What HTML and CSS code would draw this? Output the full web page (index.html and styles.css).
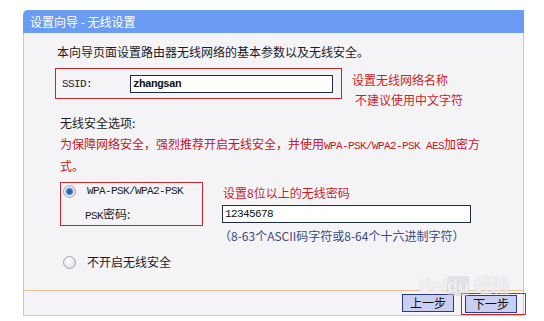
FILE: index.html
```html
<!DOCTYPE html>
<html lang="zh-CN">
<head>
  <meta charset="UTF-8" />
  <title>设置向导 - 无线设置</title>
  <link rel="stylesheet" href="styles.css">
</head>
<body>
  <div class="panel">
    <div class="panel-head">设置向导 - 无线设置</div>
    <div class="panel-body">
      <p class="intro">本向导页面设置路由器无线网络的基本参数以及无线安全。</p>

      <div class="ssid-row">
        <div class="mark-box ssid-box">
          <span class="label en">SSID:</span>
          <input class="field ssid-input" type="text" value="zhangsan" />
        </div>
        <div class="notes">
          <div>设置无线网络名称</div>
          <div class="note-2">不建议使用中文字符</div>
        </div>
      </div>

      <div class="sec-title">无线安全选项:</div>
      <p class="warn">为保障网络安全，强烈推荐开启无线安全，并使用<span class="en">WPA-PSK/WPA2-PSK AES</span>加密方<br>式。</p>

      <div class="sec-row">
        <div class="mark-box wpa-box">
          <div class="opt"><span class="radio on"></span><span class="en">WPA-PSK/WPA2-PSK</span></div>
          <div class="psk-label"><span class="en">PSK</span>密码:</div>
        </div>
        <div class="psk-col">
          <div class="note">设置8位以上的无线密码</div>
          <input class="field psk-input" type="text" value="12345678" />
          <div class="hint">（8-63个ASCII码字符或8-64个十六进制字符）</div>
        </div>
      </div>

      <div class="opt off-row"><span class="radio"></span>不开启无线安全</div>
    </div>
    <div class="panel-foot">
      <button class="btn prev">上一步</button>
      <span class="next-mark"><button class="btn">下一步</button></span>
    </div>
    <div class="watermark">Bai<span>du</span> 经验</div>
  </div>
</body>
</html>
```

FILE: styles.css
```css
body {
  margin: 0;
  background: #fff;
  font-family: "Noto Sans CJK SC", sans-serif;
  font-size: 12px;
  color: #1c1c28;
}

p {
  margin: 0;
}

.en {
  font-family: "Liberation Mono", monospace;
  font-size: 11px;
  letter-spacing: -0.6px;
}

.panel {
  position: relative;
  width: 501px;
  margin: 10px 0 0 23px;
}

.panel-head {
  height: 23px;
  line-height: 23px;
  padding-left: 7px;
  background: #6a9cf3;
  color: #fff;
  border-top-left-radius: 5px;
}

.panel-body {
  height: 257px;
  box-sizing: border-box;
  padding: 11px 0 0 33px;
  background: #f4f4f7;
  border-left: 1px solid #ebbe93;
  border-right: 1px solid #ebbe93;
}

.intro {
  line-height: 16px;
}

.mark-box {
  box-sizing: border-box;
  border: 1px solid #c4262e;
}

.ssid-row {
  display: flex;
  margin: 8px 0 0 -2px;
}

.ssid-box {
  width: 287px;
  height: 31px;
  display: flex;
  align-items: center;
  padding-left: 6px;
}

.ssid-box .label {
  width: 68px;
}

.field {
  height: 18px;
  box-sizing: border-box;
  margin: 0;
  padding: 0 2px;
  border: 1px solid #1e2a48;
  background: #fff;
  font-family: "Liberation Mono", monospace;
  font-size: 11px;
  letter-spacing: -0.6px;
  color: #111;
  outline: none;
}

.ssid-input {
  width: 203px;
  font-weight: bold;
}

.notes {
  color: #cc1f1f;
  line-height: 16px;
  padding: 4px 0 0 10px;
}

.note-2 {
  margin: 4px 0 0 3px;
}

.sec-title {
  margin: 7px 0 0 3px;
  line-height: 16px;
}

.warn {
  margin: 3px 0 0 3px;
  line-height: 19px;
  color: #c4161c;
}

.sec-row {
  display: flex;
  margin: 7px 0 0 3px;
}

.wpa-box {
  width: 143px;
  height: 44px;
  padding-left: 2px;
}

.opt {
  display: flex;
  align-items: center;
  line-height: 16px;
}

.radio {
  flex: none;
  width: 13px;
  height: 13px;
  box-sizing: border-box;
  margin-right: 11px;
  border-radius: 50%;
  border: 1px solid #9ea6b0;
  background: radial-gradient(circle at 40% 35%, #ffffff, #d4d8de);
}

.radio.on {
  background: radial-gradient(circle, #24509e 0, #3a6cc0 2.5px, #8fb0e2 3.5px, #eef1f5 4.5px, #c9ced6 100%);
}

.psk-label {
  margin: 7px 0 0 22px;
  line-height: 16px;
}

.psk-col {
  margin-left: 19px;
  padding-top: 3px;
}

.note {
  color: #cc1f1f;
  line-height: 16px;
  margin-left: 1px;
}

.psk-input {
  display: block;
  width: 249px;
  margin-top: 4px;
}

.hint {
  color: #3c4a80;
  line-height: 16px;
  margin: 5px 0 0 -3px;
}

.off-row {
  margin: 10px 0 0 6px;
}

.panel-foot {
  height: 26px;
  box-sizing: border-box;
  border: 1px solid #ebbe93;
  background: #f4f4f7;
  display: flex;
  align-items: flex-start;
  justify-content: flex-end;
  padding-top: 2px;
}

.btn {
  width: 52px;
  height: 18px;
  box-sizing: border-box;
  padding: 0;
  border: 1px solid #2d3a86;
  background: #c9cff3;
  font-family: "Noto Sans CJK SC", sans-serif;
  font-size: 12px;
  line-height: 16px;
  color: #111;
}

.prev {
  margin: 1px 7px 0 0;
}

.next-mark {
  display: flex;
  padding: 1px 8px 1px 3px;
  margin-right: -3px;
  border: 1px solid #c4262e;
}

.watermark {
  position: absolute;
  left: 396px;
  top: 261px;
  font-family: "Liberation Sans", sans-serif;
  font-size: 18px;
  font-weight: bold;
  color: rgba(255, 255, 255, 0.75);
  text-shadow: 0 0 1px #c2c2cc;
  pointer-events: none;
}

.watermark span {
  background: rgba(205, 205, 214, 0.5);
  border-radius: 3px;
}
```
